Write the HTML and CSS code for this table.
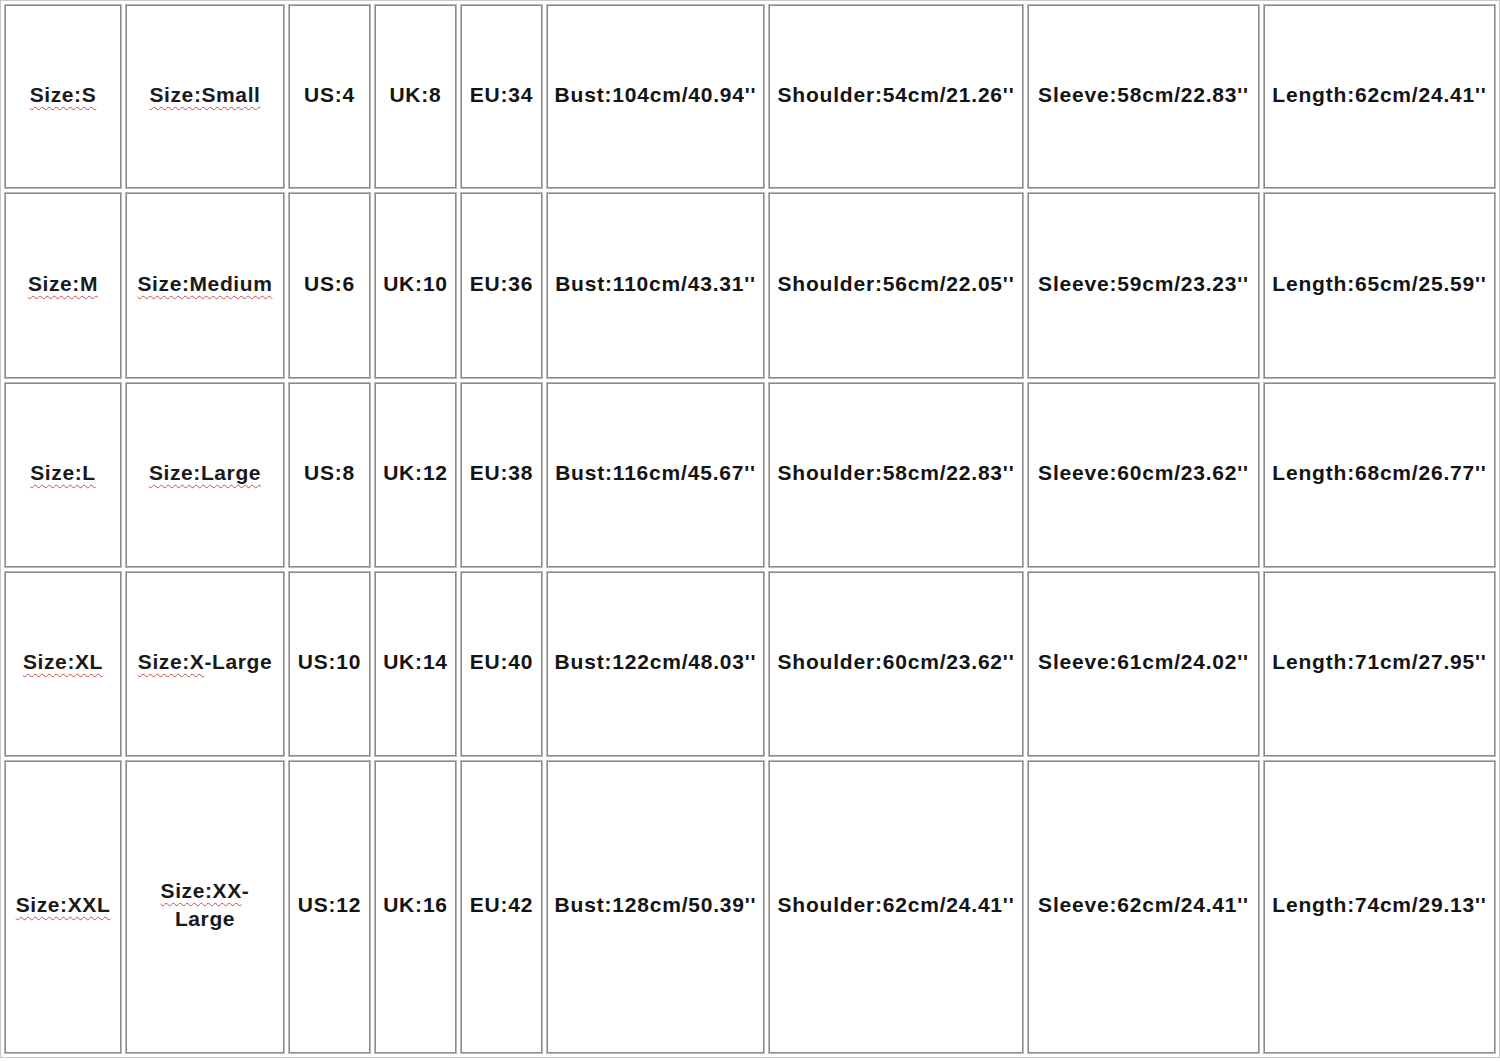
FILE: index.html
```html
<!DOCTYPE html>
<html>
<head>
<meta charset="utf-8">
<link rel="stylesheet" href="styles.css">
</head>
<body>
<table class="chart">
  <colgroup>
    <col class="c1"><col class="c2"><col class="c3"><col class="c4"><col class="c5"><col class="c6"><col class="c7"><col class="c8"><col class="c9">
  </colgroup>
  <tr class="r1">
    <td class="sz"><span class="sp">Size:S</span></td>
    <td class="sz"><span class="sp">Size:Small</span></td>
    <td>US:4</td><td>UK:8</td><td>EU:34</td>
    <td>Bust:104cm/40.94''</td><td>Shoulder:54cm/21.26''</td><td>Sleeve:58cm/22.83''</td><td>Length:62cm/24.41''</td>
  </tr>
  <tr class="r2">
    <td class="sz"><span class="sp">Size:M</span></td>
    <td class="sz"><span class="sp">Size:Medium</span></td>
    <td>US:6</td><td>UK:10</td><td>EU:36</td>
    <td>Bust:110cm/43.31''</td><td>Shoulder:56cm/22.05''</td><td>Sleeve:59cm/23.23''</td><td>Length:65cm/25.59''</td>
  </tr>
  <tr class="r3">
    <td class="sz"><span class="sp">Size:L</span></td>
    <td class="sz"><span class="sp">Size:Large</span></td>
    <td>US:8</td><td>UK:12</td><td>EU:38</td>
    <td>Bust:116cm/45.67''</td><td>Shoulder:58cm/22.83''</td><td>Sleeve:60cm/23.62''</td><td>Length:68cm/26.77''</td>
  </tr>
  <tr class="r4">
    <td class="sz"><span class="sp">Size:XL</span></td>
    <td class="sz"><span class="sp">Size:X</span>-Large</td>
    <td>US:10</td><td>UK:14</td><td>EU:40</td>
    <td>Bust:122cm/48.03''</td><td>Shoulder:60cm/23.62''</td><td>Sleeve:61cm/24.02''</td><td>Length:71cm/27.95''</td>
  </tr>
  <tr class="r5">
    <td class="sz"><span class="sp">Size:XXL</span></td>
    <td class="sz"><span class="sp">Size:XX</span>-<br>Large</td>
    <td>US:12</td><td>UK:16</td><td>EU:42</td>
    <td>Bust:128cm/50.39''</td><td>Shoulder:62cm/24.41''</td><td>Sleeve:62cm/24.41''</td><td>Length:74cm/29.13''</td>
  </tr>
</table>
</body>
</html>
```

FILE: styles.css
```css
html, body {
  margin: 0;
  padding: 0;
  background: #ffffff;
}

.chart {
  border-collapse: separate;
  border-spacing: 3px;
  border: 1px solid #c8c8c8;
  table-layout: fixed;
  width: 1500px;
  font-family: "Liberation Sans", Arial, sans-serif;
  font-weight: bold;
  font-size: 21px;
  letter-spacing: 0.8px;
  color: #141414;
}

.c1 { width: 118px; }
.c2 { width: 160px; }
.c3 { width: 83px; }
.c4 { width: 83px; }
.c5 { width: 83px; }
.c6 { width: 219px; }
.c7 { width: 256px; }
.c8 { width: 233px; }
.c9 { width: 233px; }

.chart td {
  box-sizing: border-box;
  border: 1px solid #b8b8b8;
  box-shadow: inset 0 0 0 1px #8a8a8a;
  padding: 0 1px 4px;
  text-align: center;
  vertical-align: middle;
  white-space: nowrap;
  line-height: 28px;
  overflow: hidden;
}

.chart td.sz {
  color: #1a1a1a;
  letter-spacing: 0.6px;
}

.r1 td { height: 185px; }
.r2 td { height: 187px; }
.r3 td { height: 186px; }
.r4 td { height: 186px; }
.r5 td { height: 294px; }

.sp {
  text-decoration: underline wavy #c0504d;
  text-decoration-thickness: 1px;
  text-underline-offset: 4px;
}
```
